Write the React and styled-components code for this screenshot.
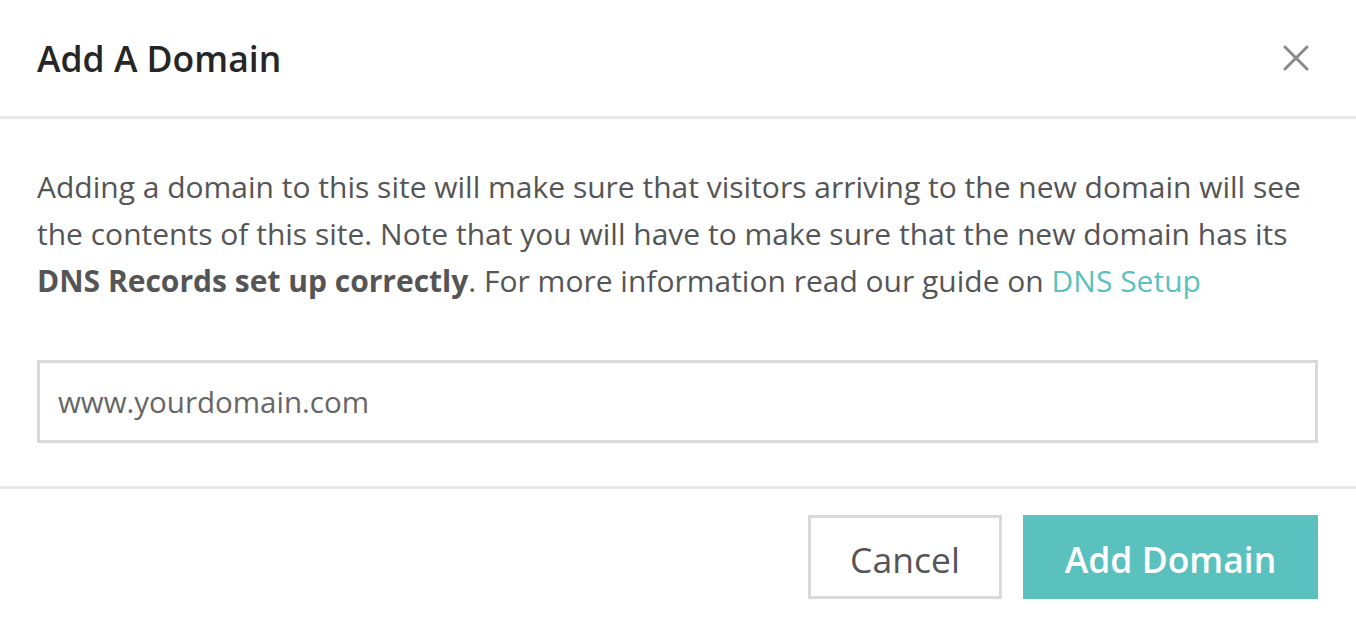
import React from 'react';
import styled, {createGlobalStyle} from 'styled-components';

const GlobalStyle = createGlobalStyle`
  html, body {
    margin: 0;
    padding: 0;
    background: #fff;
  }
  body {
    font-family: "Open Sans", "Noto Sans", sans-serif;
  }
`;

const Modal = styled.div`
  width: 1356px;
  background: #fff;
`;

const Header = styled.div`
  height: 116px;
  padding: 0 45px 0 37px;
  display: flex;
  align-items: center;
  justify-content: space-between;
  border-bottom: 3px solid #e9e9e9;
`;

const Title = styled.h2`
  margin: 0;
  font-size: 35.5px;
  font-weight: 600;
  color: #262626;
`;

const CloseButton = styled.button`
  border: none;
  background: none;
  padding: 0;
  width: 30px;
  height: 30px;
  display: flex;
  align-items: center;
  justify-content: center;
  cursor: pointer;
`;

const Body = styled.div`
  padding: 44px 38px 43px 37px;
  border-bottom: 3px solid #e9e9e9;
`;

const Text = styled.p`
  margin: 0;
  font-size: 30px;
  line-height: 47px;
  color: #555;
`;

const Link = styled.a`
  color: #5bc0be;
  text-decoration: none;
`;

const Input = styled.input`
  display: block;
  box-sizing: border-box;
  width: 100%;
  height: 83px;
  margin-top: 56px;
  padding: 0 18px;
  border: 3px solid #d9d9d9;
  font-family: inherit;
  font-size: 29.5px;
  color: #555;
  outline: none;
  &::placeholder {
    color: #666;
  }
`;

const Footer = styled.div`
  padding: 26px 38px 20px 37px;
  display: flex;
  justify-content: flex-end;
  gap: 21px;
`;

const Button = styled.button`
  box-sizing: border-box;
  height: 84px;
  width: ${props => props.width}px;
  padding: 4px 0 0;
  font-family: inherit;
  font-size: 35.5px;
  font-weight: ${props => props.primary ? 600 : 400};
  color: ${props => props.primary ? '#fff' : '#555'};
  background: ${props => props.primary ? '#5bc1bf' : '#fff'};
  border: ${props => props.primary ? 'none' : '3px solid #d9d9d9'};
  cursor: pointer;
`;

const CloseIcon = () => (
  <svg width="26" height="26" viewBox="0 0 26 26">
    <path d="M2 2 L24 24 M24 2 L2 24" stroke="#8a8a8a" strokeWidth="3" strokeLinecap="round"/>
  </svg>
);

export default function App() {
  return (
    <Modal>
      <GlobalStyle/>
      <Header>
        <Title>Add A Domain</Title>
        <CloseButton aria-label="Close"><CloseIcon/></CloseButton>
      </Header>
      <Body>
        <Text>
          Adding a domain to this site will make sure that visitors arriving to the new domain will see
          the contents of this site. Note that you will have to make sure that the new domain has its{' '}
          <b>DNS Records set up correctly</b>. For more information read our guide on <Link href="#">DNS Setup</Link>
        </Text>
        <Input placeholder="www.yourdomain.com"/>
      </Body>
      <Footer>
        <Button width={194}>Cancel</Button>
        <Button primary width={295}>Add Domain</Button>
      </Footer>
    </Modal>
  );
}
